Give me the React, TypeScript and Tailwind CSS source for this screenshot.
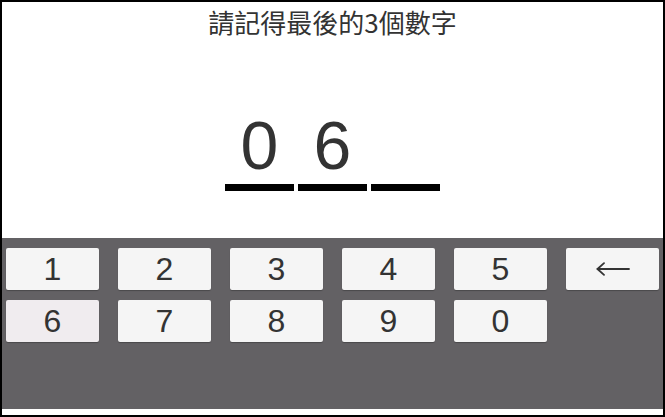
import React from 'react'

const keys: string[] = ['1', '2', '3', '4', '5', '←', '6', '7', '8', '9', '0']

// thin left arrow for the backspace key
const BackArrow: React.FC = () => (
    <svg width='34' height='14' viewBox='0 0 34 14' fill='none' stroke='#333' strokeWidth='1.8' strokeLinecap='round' strokeLinejoin='round'>
        <path d='M1.5 7H33' />
        <path d='M8 1.2L1.5 7L8 12.8' />
    </svg>
)

const App: React.FC = () => {
    let entered: string[] = ['0', '6', '']
    let active = '6'
    return (
        <div className='w-[665px] h-[417px] border-2 border-black bg-white flex flex-col overflow-hidden' style={{ fontFamily: '"Liberation Sans", Arial, sans-serif' }}>
            <div className='h-[236px] flex flex-col items-center'>
                <h1 className='mt-[5px] text-[26px] leading-[30px] text-[#333]' style={{ fontFamily: '"Noto Sans CJK TC", "Noto Sans", sans-serif' }}>
                    請記得最後的3個數字
                </h1>
                <div className='mt-[69px] flex gap-[4px]'>
                    {
                        entered.map((d, key) => (
                            <div key={key} className='w-[69px] flex flex-col items-center'>
                                <span className='h-[78px] text-[68px] leading-[78px] text-[#333]'>{d}</span>
                                <div className='w-full h-[7px] bg-black' />
                            </div>
                        ))
                    }
                </div>
            </div>
            <div className='h-[171px] bg-[#636164] px-[4px] pt-[10px]'>
                <div className='grid grid-cols-6 gap-x-[19px] gap-y-[10px]'>
                    {
                        keys.map((k) => (
                            <button key={k} className={'h-[42px] flex items-center justify-center rounded-[2px] shadow-[0_1px_1px_rgba(0,0,0,0.25)] text-[32px] leading-[42px] text-[#333] ' + (k === active ? 'bg-[#f0ecef]' : 'bg-[#f5f5f5]')}>
                                {k === '←' ? <BackArrow /> : k}
                            </button>
                        ))
                    }
                </div>
            </div>
            <div className='flex-1 bg-white' />
        </div>
    )
}

export default App
